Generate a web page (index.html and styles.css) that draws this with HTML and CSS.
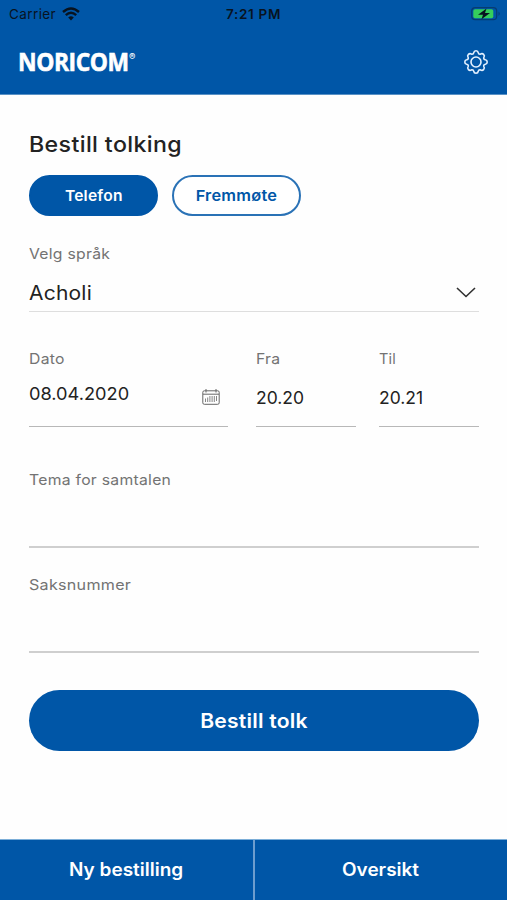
FILE: index.html
```html
<!DOCTYPE html>
<html lang="no">
<head>
<meta charset="utf-8">
<title>Noricom</title>
<link rel="stylesheet" href="styles.css">
</head>
<body>
<div class="app">
  <header class="header">
    <div class="status">
      <div class="carrier"><span class="carrier-name">Carrier</span>
        <svg class="wifi" viewBox="0 0 18 14" width="18" height="14"><g fill="none" stroke="#08131f" stroke-width="2.4"><path d="M1 5Q9-2 17 5"/><path d="M3.8 8.1Q9 3.4 14.2 8.1"/></g><path d="M6.2 10.4Q9 8 11.8 10.4L9 13.4Z" fill="#08131f"/></svg>
      </div>
      <span class="clock">7:21 PM</span>
      <svg class="battery" viewBox="0 0 30 14" width="30" height="14"><rect x=".7" y=".7" width="25" height="12" rx="3.5" fill="none" stroke="#073c70" stroke-width="1.2"/><path d="M27.5 4.5Q30 6.7 27.5 9Z" fill="#073c70"/><rect x="2.3" y="2.3" width="20" height="9" rx="1.8" fill="#35cf5c"/><path d="M15.5 1.5L7 7.8H12L10.5 12.3L19 6H14Z" fill="#08131f"/></svg>
    </div>
    <div class="brandbar">
      <div class="brand"><span class="logo">NORICOM</span><span class="reg">®</span></div>
      <svg class="gear" viewBox="0 0 24 24" width="24" height="24" fill="none" stroke="#e4f1ff" stroke-width="1.6" stroke-linejoin="round"><path d="M9.800 2.600Q10 .8 12 .8T14.200 2.600Q14.600 4.500 16.400 4.200Q18.200 3 19.600 4.400T19.800 7.600Q19.300 9.300 21.400 9.800Q23.200 10 23.200 12T21.400 14.200Q19.300 14.700 19.800 16.400Q21 18.200 19.600 19.600T16.400 19.800Q14.600 19.500 14.200 21.400Q14 23.200 12 23.200T9.800 21.400Q9.400 19.500 7.600 19.800Q5.800 21 4.400 19.600T4.200 16.400Q4.700 14.700 2.600 14.200Q.8 14 .8 12T2.600 9.800Q4.700 9.300 4.200 7.600Q3 5.800 4.400 4.400T7.600 4.200Q9.400 4.500 9.800 2.600Z"/><circle cx="12" cy="12" r="5"/></svg>
    </div>
  </header>
  <main class="main">
    <h1 class="title">Bestill tolking</h1>
    <div class="modes"><button class="mode active"><span class="wide-sm">Telefon</span></button><button class="mode"><span class="wide">Fremmøte</span></button></div>
    <div class="field language">
      <span class="label">Velg språk</span>
      <div class="value-row"><span class="value">Acholi</span>
        <svg class="chevron" viewBox="0 0 20 12" width="20" height="12" fill="none" stroke="#303030" stroke-width="1.6"><path d="M1 1L10 9.500L19 1"/></svg></div>
    </div>
    <div class="when">
      <div class="field slot date"><span class="label">Dato</span>
        <div class="value-row"><span class="value">08.04.2020</span>
          <svg class="calendar" viewBox="0 0 18 16" width="18" height="16" fill="none" stroke="#666" stroke-width="1"><rect x=".8" y="1.800" width="16.400" height="13.500" rx="1.500"/><path d="M1 5.200H17M4 0V3.500M14 0V3.500"/><path d="M3.500 9.500V13M5.700 8.500V13M7.900 7V13M10.100 7V13M12.300 7V13M14.500 7V12" stroke="#777" stroke-width=".9"/></svg></div></div>
      <div class="field slot from"><span class="label">Fra</span><span class="value time">20.20</span></div>
      <div class="field slot to"><span class="label til">Til</span><span class="value time">20.21</span></div>
    </div>
    <div class="field entry topic"><span class="label">Tema for samtalen</span></div>
    <div class="field entry"><span class="label case">Saksnummer</span></div>
    <button class="submit"><span class="wide-md">Bestill tolk</span></button>
  </main>
  <nav class="tabs"><a class="tab"><span class="wide-md">Ny bestilling</span></a><a class="tab"><span class="wide-md">Oversikt</span></a></nav>
</div>
</body>
</html>
```

FILE: styles.css
```css
* { box-sizing: border-box; }
body { margin: 0; background: #fefefe; color: #222; font-family: Inter, "Liberation Sans", sans-serif; }
button { font: inherit; padding: 0; margin: 0; }
svg { display: block; flex: none; }
.app { height: 900px; display: flex; flex-direction: column; overflow: hidden; }
.header { height: 95px; flex: none; background: #0056a7; border-bottom: 1px solid #5991c5; }
.status { height: 28px; padding: 0 6px 0 9px; display: grid; grid-template-columns: 1fr auto 1fr; align-items: center; color: #08131f; font-size: 13.5px; }
.carrier { display: flex; align-items: center; gap: 6px; }
.carrier-name { letter-spacing: .4px; }
.clock { font-weight: 600; font-size: 13.5px; letter-spacing: .7px; margin-right: 3px; }
.battery { justify-self: end; }
.brandbar { height: 66px; padding: 1px 19px 0 18px; display: flex; justify-content: space-between; align-items: center; }
.brand { display: flex; align-items: flex-start; color: #fff; }
.logo { width: 111px; font: 700 25px/25px "Open Sans", sans-serif; -webkit-text-stroke: .6px #fff; letter-spacing: -.5px; transform: scaleX(.915); transform-origin: left; }
.reg { font: 400 9.5px/15px Inter, sans-serif; }
.gear { margin-top: 1px; }
.wide, .wide-sm, .wide-md { display: inline-block; }
.wide { transform: scaleX(1.09); }
.wide-md { transform: scaleX(1.055); }
.wide-sm { transform: scaleX(1.04); }
.main { flex: 1; padding: 34px 28px 0 29px; }
.title { margin: 0; font-size: 21.5px; line-height: 30px; font-weight: 500; letter-spacing: .35px; transform: scaleX(1.077); transform-origin: left; }
.modes { display: flex; gap: 14px; margin-top: 16px; }
.mode { width: 129px; height: 41px; border: 2px solid #2a72b6; border-radius: 21px; background: #fff; color: #0056a7; font-size: 15px; font-weight: 600; letter-spacing: .2px; }
.mode.active { border-color: #0056a7; background: #0056a7; color: #fff; }
.field { display: flex; flex-direction: column; }
.label { font-size: 14.5px; line-height: 20px; color: #737373; letter-spacing: .25px; transform: scaleX(1.085); transform-origin: left; }
.label.case { transform: scaleX(1.11); }
.label.til { transform: none; }
.value-row { display: flex; justify-content: space-between; align-items: center; }
.value { font-size: 17.5px; line-height: 24px; transform-origin: left; }
.language { height: 96px; padding-top: 28px; border-bottom: 1px solid #dedede; }
.language .value-row { margin-top: 16px; height: 26px; padding-right: 3px; }
.language .value { font-size: 20px; letter-spacing: .2px; transform: scaleX(1.05); }
.when { margin-top: 37px; display: flex; }
.slot { height: 78px; width: 100px; border-bottom: 1.5px solid #b8b8b8; }
.date { width: 199px; }
.from { margin-left: 28px; }
.to { margin-left: 23px; }
.date .value-row { height: 34px; margin-top: 10px; align-items: flex-start; padding-right: 8px; }
.date .value { line-height: 30px; transform: scaleX(1.04); }
.calendar { margin-top: 10px; }
.time { margin-top: 17px; }
.entry { height: 105px; padding-top: 27px; border-bottom: 2px solid #cfcfcf; }
.topic { height: 121px; padding-top: 43px; }
.submit { display: block; width: 450px; height: 61px; margin-top: 37px; border: 0; border-radius: 31px; background: #0056a7; color: #fff; font-size: 20px; font-weight: 600; letter-spacing: .2px; }
.tabs { height: 61px; flex: none; display: grid; grid-template-columns: 253px 1fr; background: #0056a7; color: #fff; font-size: 18px; font-weight: 600; border-top: 1px solid #7caed8; }
.tab { display: flex; align-items: center; justify-content: center; padding-bottom: 2px; }
.tab + .tab { border-left: 2px solid #6d9dce; }
```
